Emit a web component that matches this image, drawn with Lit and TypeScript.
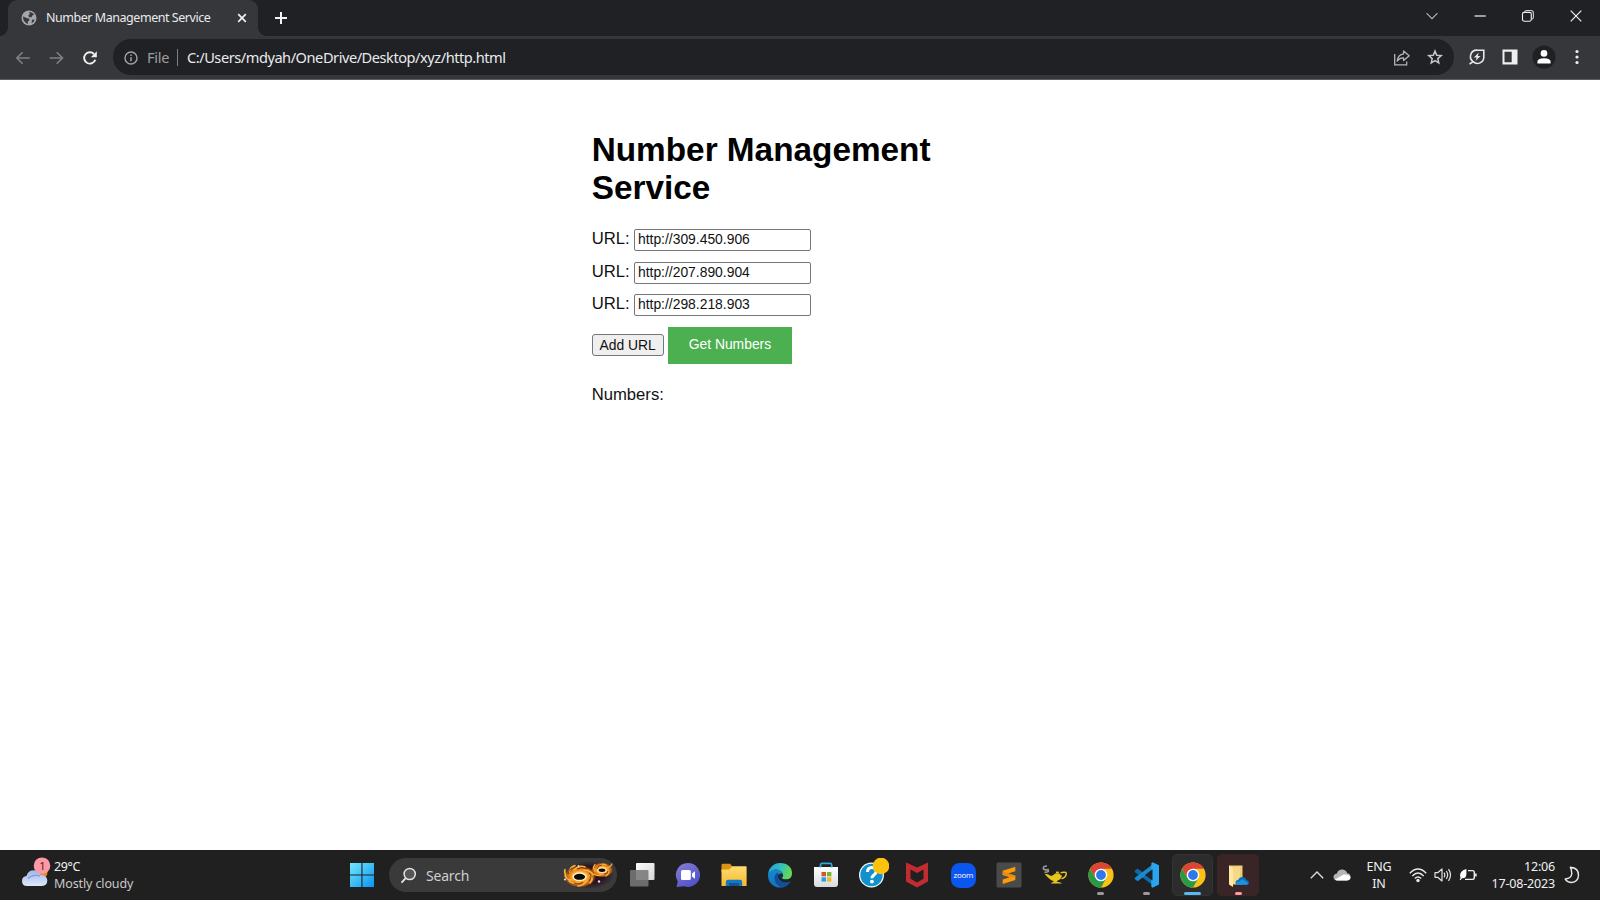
import { LitElement, html, css } from "lit";
import { customElement, state } from "lit/decorators.js";

const chromeLogo = html`<svg width="26" height="26" viewBox="0 0 26 26">
  <circle cx="13" cy="13" r="12.6" fill="#fbc116"/>
  <path d="M2.1 6.7A12.6 12.6 0 0 1 23.9 6.7L13 6.7 7.5 9.8 7.5 16z" fill="#dc4437"/>
  <path d="M2.1 6.7A12.6 12.6 0 0 0 13 25.6L18.4 16.1 13 19.2 7.5 16.1z" fill="#2a9a48"/>
  <circle cx="13" cy="13" r="6.3" fill="#fff"/>
  <circle cx="13" cy="13" r="4.9" fill="#2f78ea"/>
</svg>`;

const icons = {
  globe: html`<svg width="16" height="16" viewBox="0 0 16 16">
    <circle cx="8" cy="8" r="7.5" fill="#a4a7ab"/>
    <path d="M2 7.600Q2 7 2.300 6.500L6 8.200 8.200 8.600 8.300 10.500 6.800 11.600 6.900 13.900Q2.600 12.600 2 7.600zM8.200 2Q11.500 1.900 13.200 5L11.400 5.300 10.500 7.200 8 7.300 7.400 5.200 8.800 4z M11 9.800L13.700 9.600Q13 12.200 10.600 13.300z" fill="#38393d"/>
  </svg>`,
  tabClose: html`<svg width="10" height="10" viewBox="0 0 10 10"><path d="M1.200 1.200l7.600 7.600M8.800 1.200L1.200 8.800" stroke="#f1f1f1" stroke-width="1.700"/></svg>`,
  plus: html`<svg width="14" height="14" viewBox="0 0 14 14"><path d="M7 1v12M1 7h12" stroke="#f4f4f4" stroke-width="2"/></svg>`,
  down: html`<svg width="14" height="14" viewBox="0 0 14 14"><path d="M1.500 4.200L7 9.700l5.500-5.500" fill="none" stroke="#b4b5b7" stroke-width="1.100"/></svg>`,
  min: html`<svg width="14" height="14" viewBox="0 0 14 14"><path d="M1.500 7h11.300" stroke="#f2f2f2" stroke-width="1.200"/></svg>`,
  restore: html`<svg width="14" height="14" viewBox="0 0 14 14"><rect x="1.500" y="3.400" width="8.800" height="8.800" rx="1.600" fill="none" stroke="#f2f2f2" stroke-width="1.100"/><path d="M3.600 3.200q.3-1.700 2-1.700h4.300q2.500 0 2.500 2.500v4.300q0 1.800-1.900 2" fill="none" stroke="#d0d0d0" stroke-width="1.100"/></svg>`,
  close: html`<svg width="14" height="14" viewBox="0 0 14 14"><path d="M1.700 1.700l10.600 10.600M12.300 1.700L1.700 12.300" stroke="#f2f2f2" stroke-width="1.200"/></svg>`,
  back: html`<svg width="16" height="16" viewBox="0 0 16 16"><path d="M14.700 8H2M7.600 2.200L1.800 8l5.800 5.800" fill="none" stroke="#7f8185" stroke-width="1.600"/></svg>`,
  forward: html`<svg width="16" height="16" viewBox="0 0 16 16"><path d="M.6 8h13M7.700 2.200L13.500 8l-5.800 5.800" fill="none" stroke="#7f8185" stroke-width="1.600"/></svg>`,
  reload: html`<svg width="16" height="16" viewBox="0 0 16 16"><path d="M13.300 9.700A5.700 5.700 0 1 1 12 4" fill="none" stroke="#f1f1f1" stroke-width="1.900"/><path d="M14.800 1.300v6H8.800z" fill="#f1f1f1"/></svg>`,
  info: html`<svg width="14" height="14" viewBox="0 0 14 14"><circle cx="7" cy="7" r="6" fill="none" stroke="#a0a3a7" stroke-width="1.400"/><path d="M7 6.200v4M7 3.600v1.500" stroke="#a0a3a7" stroke-width="1.500"/></svg>`,
  share: html`<svg width="18" height="17" viewBox="0 0 18 17"><path d="M1.700 5v10.800h12V12.500" fill="none" stroke="#b3b5b8" stroke-width="1.300"/><path d="M10.600 2l5.600 4.800-5.600 4.800V8.900Q6.700 8.700 4.200 12 5 5.500 10.600 4.800z" fill="none" stroke="#b3b5b8" stroke-width="1.300" stroke-linejoin="round"/></svg>`,
  star: html`<svg width="18" height="18" viewBox="0 0 18 18"><path d="M9 3l1.700 4.200 4.500.4-3.400 3 1 4.400L9 12.700 5.200 15l1-4.400-3.400-3 4.500-.4z" fill="none" stroke="#c4c6c8" stroke-width="1.500"/></svg>`,
  leaf: html`<svg width="18" height="18" viewBox="0 0 18 18"><path d="M15.800 2.200V9a6.300 6.300 0 0 1-10.700 4.600A6.300 6.300 0 0 1 9.300 2.200zM5.200 13.500l-3.700 2.700" fill="none" stroke="#e6e7e8" stroke-width="1.600"/><path d="M10.700 4.600L5.900 9.500h2.700l-.8 3.300 4.700-4.900H9.800z" fill="#e6e7e8"/></svg>`,
  panel: html`<svg width="16" height="16" viewBox="0 0 16 16"><path d="M.5.500h15v15H.5zM2.500 2.700v10.600h7.200V2.700z" fill="#eeeff0" fill-rule="evenodd"/></svg>`,
  avatar: html`<svg width="24" height="24" viewBox="0 0 24 24"><circle cx="12" cy="12" r="11.500" fill="#1f2023"/><circle cx="12" cy="8.400" r="3.300" fill="#fff"/><path d="M5.400 18.500v-1.700q0-3.600 6.600-3.600t6.600 3.600v1.700z" fill="#fff"/></svg>`,
  dots: html`<svg width="6" height="16" viewBox="0 0 6 16"><g fill="#eeeff0"><circle cx="3" cy="2.500" r="1.600"/><circle cx="3" cy="8" r="1.600"/><circle cx="3" cy="13.500" r="1.600"/></g></svg>`,

  weather: html`<svg width="30" height="32" viewBox="0 0 30 32">
    <defs><linearGradient id="w" x2="0" y2="1"><stop stop-color="#9db7ea"/><stop offset="1" stop-color="#dfe8fb"/></linearGradient></defs>
    <circle cx="20.500" cy="15.500" r="6" fill="#e58a2a"/>
    <path d="M6 29q-5 0-5-5 0-4.500 4.500-5Q7 13.200 12.500 13.200q5.300 0 7 4.800 6.800 0 6.800 5.600T20.500 29z" fill="url(#w)"/>
    <path d="M7 21.500q5-5 12-2.500" fill="none" stroke="#86a2de" stroke-width="1.500"/>
    <circle cx="21" cy="8.700" r="8.300" fill="#fd99a3"/>
  </svg>`,
  windows: html`<svg width="26" height="26" viewBox="0 0 26 26"><defs><linearGradient id="win" x2="1" y2="1"><stop stop-color="#72e8fb"/><stop offset="1" stop-color="#0a93f2"/></linearGradient></defs><path d="M1 1h11.400v11.400H1zM13.500 1H25v11.400H13.500zM1 13.500h11.400V25H1zM13.500 13.500H25V25H13.500z" fill="url(#win)"/></svg>`,
  search: html`<svg width="17" height="17" viewBox="0 0 17 17"><circle cx="9.700" cy="7" r="5.600" fill="#565656" stroke="#e2e2e2" stroke-width="1.500"/><path d="M5.700 11.200L1.500 15.700" stroke="#e2e2e2" stroke-width="1.900"/></svg>`,
  galaxy: html`<svg width="52" height="28" viewBox="0 0 52 28">
    <defs>
      <radialGradient id="ga"><stop offset=".3" stop-color="#ffdc8a"/><stop offset=".5" stop-color="#f7a227"/><stop offset=".8" stop-color="#c86511"/><stop offset="1" stop-color="#c86511" stop-opacity="0"/></radialGradient>
      <radialGradient id="gb"><stop offset=".6" stop-color="#2a1420"/><stop offset="1" stop-color="#2a1420" stop-opacity="0"/></radialGradient>
    </defs>
    <ellipse cx="27" cy="14" rx="25" ry="14" fill="url(#gb)"/>
    <ellipse cx="18" cy="15.500" rx="16" ry="11" fill="url(#ga)"/>
    <ellipse cx="40" cy="9" rx="11" ry="7.500" fill="url(#ga)"/>
    <g fill="none" stroke="#f9b13b" stroke-width="1.600" stroke-linecap="round">
      <path d="M4 15Q2 11 3 8.500M7 11Q8 6 13 4.500M12 9Q17 4 23 6M22 9Q29 9 31 14M28 14Q32 18 28 22M25 19Q22 25 16 25M16 22Q10 23 7 20M10 19Q5 19 3 15"/>
      <path d="M33 10Q30 7 33 3.500M36 6Q40 1.500 44 4M43 7Q48 7 50 3M46 9Q48 12 44 15M40 13Q36 16 32 13" stroke-width="1.200"/>
    </g>
    <g fill="none" stroke="#6b2d10" stroke-width=".9"><path d="M6 13Q6 9 10 7M15 8Q20 5 25 8M27 12Q31 15 27 20M21 21Q18 24 12 22M35 8Q36 4 40 4M46 10Q46 13 42 13"/></g>
    <ellipse cx="17.500" cy="15.800" rx="7.200" ry="4.300" fill="#fff0c4"/><ellipse cx="17.500" cy="15.800" rx="5.600" ry="3" fill="#0b0809"/>
    <ellipse cx="40" cy="9.300" rx="4.800" ry="2.800" fill="#fde1a0"/><ellipse cx="40" cy="9.300" rx="3.400" ry="1.700" fill="#0b0809"/>
    <g fill="#e8d9e8"><circle cx="3" cy="18.500" r="1.100"/><circle cx="37" cy="20.500" r="1.200"/><circle cx="16.500" cy="5" r=".9"/></g>
  </svg>`,
  taskview: html`<svg width="26" height="26" viewBox="0 0 26 26"><defs><linearGradient id="tv" x2="1" y2="1"><stop stop-color="#fff"/><stop offset="1" stop-color="#d5d5d5"/></linearGradient></defs><rect x="7" y="1" width="18.500" height="17" rx="1" fill="url(#tv)"/><rect x="1" y="8" width="18.500" height="16.500" rx="1" fill="#777" opacity=".88"/></svg>`,
  chat: html`<svg width="26" height="26" viewBox="0 0 26 26"><defs><linearGradient id="ch" x2=".7" y2="1"><stop stop-color="#8b7fd4"/><stop offset="1" stop-color="#4c50c8"/></linearGradient></defs><path d="M13 1a12 12 0 1 1-4 23.300L1.500 25l1.300-5.500A12 12 0 0 1 13 1z" fill="url(#ch)"/><rect x="6" y="8" width="9.800" height="10" rx="1.600" fill="#fff"/><path d="M17 11.500l3-2.300v7.600l-3-2.300z" fill="#fff"/></svg>`,
  explorer: html`<svg width="26" height="26" viewBox="0 0 26 26"><defs><linearGradient id="ex" x2="0" y2="1"><stop stop-color="#ffdb70"/><stop offset="1" stop-color="#f4bb31"/></linearGradient></defs><path d="M.5 3q0-1.200 1.200-1.200H9L12 5v5H.5z" fill="#dc9417"/><path d="M.5 7.500H8l3.500-3.200H25q.6 0 .6.700v19H.5z" fill="url(#ex)"/><path d="M4.800 24v-4q0-2.200 2.200-2.200h12q2.200 0 2.200 2.200v4z" fill="#1678c1"/><path d="M8 21h10v3H8z" fill="#0c5794"/></svg>`,
  edge: html`<svg width="26" height="26" viewBox="0 0 28 28">
    <defs><linearGradient id="e1" x2="1" y2=".35"><stop stop-color="#229fe0"/><stop offset=".5" stop-color="#2ebcc4"/><stop offset="1" stop-color="#62d958"/></linearGradient><linearGradient id="e2" x2="0" y2="1"><stop stop-color="#1688d2"/><stop offset="1" stop-color="#1672ba"/></linearGradient></defs>
    <path d="M1.200 13A13 13 0 0 1 14 1Q26.800 1.500 27 12.500q-.2 6-6.200 6.300-5 .2-4.600-1.800 2-2.300.6-5Q10 3.500 1.200 13z" fill="url(#e1)"/>
    <path d="M1.100 13Q4 7.500 10 8q5 .3 7 4.800-5-1-6 3Q10 22 17 23.500q5 .5 8-2A13 13 0 0 1 1.100 13z" fill="url(#e2)"/>
    <path d="M10.800 11.500Q6.500 15 9 21.500q2 4.500 6.500 5.300Q22.500 26 25.800 20.200 21 23 16.300 21 10.500 18 12.500 12.500z" fill="#124f9b"/>
    <path d="M16.200 16.500Q17.300 14 15.800 12.500 12.900 12.800 13.200 16q1.300 3.300 5 4 3.500.2 5.500-.7 0-.6-.8-.5-4.500.6-6.500-1.100-.5-.4-.2-1.200z" fill="#1b2c44"/>
  </svg>`,
  store: html`<svg width="26" height="26" viewBox="0 0 26 26"><path d="M7.500 6V3q0-1.600 1.600-1.600h8q1.600 0 1.600 1.600v3" fill="none" stroke="#2da6da" stroke-width="1.600"/><defs><linearGradient id="st" x2="0" y2="1"><stop stop-color="#fff"/><stop offset="1" stop-color="#d9dadd"/></linearGradient></defs><path d="M1 5h24v17q0 3-3 3H4q-3 0-3-3z" fill="url(#st)"/><path d="M7.500 3.500v2M18.700 3.500v2" stroke="#2da6da" stroke-width="1.600"/><path d="M8.500 10H13v4.300H8.500z" fill="#e04d2b"/><path d="M14 10h4.400v4.300H14z" fill="#74b72b"/><path d="M8.500 15.300H13v4.300H8.500z" fill="#22a2e5"/><path d="M14 15.300h4.400v4.300H14z" fill="#f6b61c"/></svg>`,
  help: html`<svg width="34" height="34" viewBox="0 0 34 34"><circle cx="16.500" cy="17" r="12.500" fill="#f6fafc"/><circle cx="16.500" cy="17" r="11.200" fill="#1291cd"/><path d="M12.500 14q0-4.500 4.300-4.500t4.300 4q0 2.200-2.300 3.600-1.900 1.200-1.900 3.100" fill="none" stroke="#fff" stroke-width="3"/><circle cx="16.900" cy="23.600" r="1.900" fill="#fff"/><circle cx="26" cy="8" r="8.300" fill="#ffc20c"/></svg>`,
  mcafee: html`<svg width="24" height="28" viewBox="0 0 24 28"><path d="M1 1.500l11 5 11-5v19L12 26.500 1 20.500z" fill="#c22c30"/><path d="M5.500 8.500L12 12l6.500-3.500v9.300L12 21.500l-6.500-3.700z" fill="#202020"/></svg>`,
  sublime: html`<svg width="26" height="26" viewBox="0 0 26 26"><rect x=".5" y=".5" width="25" height="25" rx="1.500" fill="#4a4a4a"/><path d="M19.300 4.800v4.400L12 11.500l7.300 2.300v4.300L6.700 21.900v-4.400l7-2.200-7-2.200V8.700z" fill="#fc9a09"/><path d="M6.700 9.500l12.600 4.300v2L6.700 13.100z" fill="#ee8b06"/></svg>`,
  lamp: html`<svg width="26" height="20" viewBox="0 0 26 20"><path d="M5 1Q.5 1 1.500 4q2 1.500 4.500.4Q8 7.500 2.500 7.300" fill="none" stroke="#9a9a9a" stroke-width="1.600"/><path d="M2.500 8.800q3.500 0 6.500 2.200 3-.4 4-2.400h4.500l1.200 1.700h1.200q-.2 4-4.200 5.200l-1 1.200q3 .6 5 1.300v.6H9v-.6q1.500-.8 3-1.400Q7 14.500 2.500 8.800z" fill="#e6c51e"/><path d="M18.500 8q2.500-1.300 5.500-.5 1.200 4-4.500 6.300" fill="none" stroke="#e6c51e" stroke-width="1.400"/><path d="M14 7.500h2.800" stroke="#e6c51e" stroke-width="1.800"/></svg>`,
  vscode: html`<svg width="26" height="28" viewBox="0 0 26 28"><path d="M1 9.500l2-1.600q.7-.4 1.300 0L18.500 19v5L1.200 11.300q-1-.9-.2-1.800z" fill="#0d6bac"/><path d="M1 18.200l2 1.600q.7.400 1.300 0L18.500 9V3.500L1.200 16.400q-1 .9-.2 1.800z" fill="#168bd0"/><path d="M18.500 1.200l6.500 3v19.300l-6.500 3.300-1.200-1.100V2.300z" fill="#2ba6ee"/><path d="M18.500 8.300L11 13.900l7.500 5.700z" fill="#202225"/></svg>`,
  onedriveFolder: html`<svg width="22" height="26" viewBox="0 0 22 26"><path d="M2 3.500H15.500v19H5z" fill="#f0cd73"/><path d="M2 3.500l4 2.200V25l-4-2.500z" fill="#ffe8a2"/><path d="M6 5.700l7-1.500V22H6z" fill="#f7d888"/><path d="M10.500 22.800q-2.200-.2-2-2.500.3-2.200 2.700-2.300 1-3 4-3 3.200 0 4.200 3 2.500.3 2.500 2.600 0 2-2.300 2.200z" fill="#0a6fc4"/><path d="M8.700 20.800l7-3.200 5.800 3.700q-.7 1.500-2 1.500h-9q-1.600-.3-1.800-2z" fill="#1e93de"/></svg>`,

  up: html`<svg width="14" height="10" viewBox="0 0 14 10"><path d="M.8 8.200L7 2l6.200 6.200" fill="none" stroke="#e0e0e0" stroke-width="1.300"/></svg>`,
  cloud: html`<svg width="18" height="12" viewBox="0 0 18 12"><path d="M4 11.500Q.5 11 .5 8q0-3 3.200-3.300Q5.300.5 9 .5q4 0 5.200 3.700 3.300.3 3.300 3.600 0 3.400-3.500 3.700z" fill="#b5b5b5"/><path d="M2 10.500L10.500 5.500q6-.5 7 3-.5 3-3.500 3H4q-1.300 0-2-1z" fill="#fff"/></svg>`,
  wifi: html`<svg width="18" height="16" viewBox="0 0 18 16"><g fill="none" stroke="#e8e8e8" stroke-width="1.400"><path d="M.8 6.200Q9-2.300 17.200 6.200M3.300 8.900Q9 3.100 14.700 8.900M5.800 11.500Q9 8.300 12.200 11.500"/></g><circle cx="9" cy="13.500" r="1.700" fill="#e8e8e8"/></svg>`,
  sound: html`<svg width="18" height="16" viewBox="0 0 18 16"><g fill="none" stroke="#e2e2e2" stroke-width="1.200"><path d="M1 5.700h2.700L8 2v12l-4.300-3.700H1z" stroke-linejoin="round"/><path d="M10 5.700Q11.600 8 10 10.300M12.300 4Q15 8 12.300 12M14.500 2.200q4 5.800 0 11.600"/></g></svg>`,
  battery: html`<svg width="18" height="14" viewBox="0 0 18 14"><path d="M9 2.600h4.500q1.800 0 1.800 1.800v5.200q0 1.800-1.800 1.800H6" fill="none" stroke="#eee" stroke-width="1.400"/><path d="M16.900 5.400v3.200" stroke="#eee" stroke-width="1.600"/><path d="M7.400 1v5.200q-.3 4.300-4.200 3.900L1.500 12.200l-.8-.8.900-1.400Q-.8 3.400 7.400 1z" fill="#fff"/></svg>`,
  moon: html`<svg width="16" height="18" viewBox="0 0 16 18"><path d="M6.300 1.300Q14.800 2 14.500 9.500 14 16 7.500 16.500 3.500 16.500 1.200 13 7.500 12.500 7.800 7.500 7.700 4 6.300 1.300z" fill="none" stroke="#e8e8e8" stroke-width="1.400" stroke-linejoin="round"/></svg>`,
};

@customElement("browser-chrome")
class BrowserChrome extends LitElement {
  static styles = css`
    :host { display: block; height: 80px; background: #36373b; font-family: "Noto Sans", "Open Sans", sans-serif; color: #e9eaec; }
    * { box-sizing: border-box; }
    svg { display: block; flex: none; }
    .strip { height: 36px; display: flex; background: #202125; padding-left: 8px; }
    .tab { width: 250px; height: 36px; background: #36373b; border-radius: 9px 9px 0 0; display: flex; align-items: center; padding: 0 11px 1px 13px; position: relative; }
    .tab::before, .tab::after { content: ""; position: absolute; bottom: 0; width: 8px; height: 8px; }
    .tab::before { left: -8px; background: radial-gradient(circle at 0 0, transparent 7.500px, #36373b 8px); }
    .tab::after { right: -8px; background: radial-gradient(circle at 100% 0, transparent 7.500px, #36373b 8px); }
    .title { flex: 1; margin-left: 9px; font-size: 12.500px; letter-spacing: -0.460px; white-space: nowrap; }
    .plus { margin: 11px auto 0 16px; }
    .controls { display: flex; padding: 9px 0 0; }
    .controls span { width: 48px; display: flex; justify-content: center; }
    .bar { height: 44px; display: flex; align-items: center; padding: 0 0 1px 15px; border-bottom: 1px solid #5c5d61; }
    .nav { display: flex; gap: 17.500px; width: 98px; padding-top: 1px; }
    .omni { height: 36px; flex: none; width: 1341px; display: flex; align-items: center; border-radius: 18px; background: #202125; padding: 0 10px 0 11px; }
    .info { padding-top: 1px; }
    .file { margin-left: 9px; width: 30px; font-size: 14.600px; letter-spacing: -0.300px; color: #9a9da1; }
    .sep { width: 1px; height: 17px; background: #7d7f83; }
    .url { flex: 1; margin-left: 9px; font-size: 14.600px; letter-spacing: -0.465px; white-space: nowrap; }
    .star { margin-left: 15px; }
    .tools { flex: 1; display: flex; align-items: center; padding-left: 14px; }
    .panel { margin-left: 16px; } .avatar { margin-left: 14px; } .dots { margin-left: 18px; }
  `;
  render() {
    return html`
      <div class="strip">
        <div class="tab">${icons.globe}<span class="title">Number Management Service</span>${icons.tabClose}</div>
        <div class="plus">${icons.plus}</div>
        <div class="controls"><span>${icons.down}</span><span>${icons.min}</span><span>${icons.restore}</span><span>${icons.close}</span></div>
      </div>
      <div class="bar">
        <div class="nav">${icons.back}${icons.forward}${icons.reload}</div>
        <div class="omni"><span class="info">${icons.info}</span><span class="file">File</span><span class="sep"></span>
          <span class="url">C:/Users/mdyah/OneDrive/Desktop/xyz/http.html</span>
          ${icons.share}<span class="star">${icons.star}</span></div>
        <div class="tools">${icons.leaf}<span class="panel">${icons.panel}</span><span class="avatar">${icons.avatar}</span><span class="dots">${icons.dots}</span></div>
      </div>`;
  }
}

@customElement("number-service")
class NumberService extends LitElement {
  @state() urls = ["http://309.450.906", "http://207.890.904", "http://298.218.903"];
  static styles = css`
    :host { display: block; width: 416.670px; margin: 0 auto; padding-top: 51px; font: 16.670px "Liberation Sans", Arial, sans-serif; color: #111; }
    * { box-sizing: border-box; }
    h1 { margin: 0 0 23px; font-size: 33.330px; line-height: 37.500px; color: #000; }
    .row { display: flex; height: 22px; margin-bottom: 10.500px; }
    label { width: 42.300px; line-height: 19px; }
    input { width: 177px; height: 22px; border: 1px solid #767676; border-radius: 2px; padding: 0 3px 2px; font: 13.890px "Liberation Sans", Arial, sans-serif; color: #111; }
    .actions { display: flex; align-items: center; gap: 4px; height: 37px; }
    button { padding: 0 0 1px; font: 13.890px "Liberation Sans", Arial, sans-serif; color: #111; }
    .add { width: 72px; height: 22px; border: 1px solid #767676; border-radius: 3px; background: #efefef; }
    .get { width: 124.500px; height: 37px; border: 0; padding-bottom: 2px; background: #4caf50; color: #fff; }
    .result { margin-top: 21px; line-height: 19px; }
  `;
  render() {
    return html`
      <h1>Number Management Service</h1>
      ${this.urls.map((u) => html`<div class="row"><label>URL:</label><input type="text" .value=${u}></div>`)}
      <div class="actions">
        <button class="add" @click=${() => (this.urls = [...this.urls, ""])}>Add URL</button>
        <button class="get">Get Numbers</button>
      </div>
      <div class="result">Numbers:</div>`;
  }
}

@customElement("task-bar")
class TaskBar extends LitElement {
  static styles = css`
    :host { display: flex; height: 50px; background: #202020; color: #f0f0f0; font: 12.500px "Noto Sans", "Open Sans", sans-serif; }
    * { box-sizing: border-box; }
    svg { display: block; flex: none; }
    .weather { width: 339px; display: flex; padding: 7px 0 0 21px; position: relative; }
    .badge { position: absolute; left: 34px; top: 7px; width: 17px; text-align: center; line-height: 17px; font-size: 11px; color: #4b2226; }
    .lines { line-height: 17px; padding-top: 1px; margin-left: 3px; white-space: nowrap; }
    .lines div + div { color: #c9c9c9; }
    .cond { letter-spacing: -0.120px; }
    .temp { letter-spacing: -0.400px; }
    .slot { width: 45.850px; flex: none; display: flex; align-items: center; justify-content: center; position: relative; }
    .start { width: 46px; }
    .search { width: 228px; height: 34px; margin: 8px 2.500px 0 4px; border-radius: 17px; background: #3a3a3a; display: flex; align-items: center; padding: 0 3px 0 11px; }
    .search span { flex: 1; margin-left: 9px; font-size: 14px; color: #cfcfcf; letter-spacing: -0.200px; }
    .slot.on::before { content: ""; position: absolute; inset: 4px 2px; border-radius: 5px; background: #2c2c2c; border: 1px solid #333; }
    .slot.alert::before { content: ""; position: absolute; inset: 4px 2px; border-radius: 5px; background: #3a2526; }
    .slot svg { position: relative; }
    .slot i { position: absolute; bottom: 5px; width: 7px; height: 3px; border-radius: 2px; background: #9b9b9b; }
    .on i { width: 17px; background: #5cb9ec; }
    .alert i { background: #fb9ba5; }
    .zoom { width: 25px; height: 25px; border-radius: 8.500px; background: #0b55f0; color: #fff; font: 400 8px/23px "Open Sans", sans-serif; text-align: center; letter-spacing: -0.300px; }
    .tray { margin-left: auto; display: flex; align-items: center; padding-right: 20px; }
    .lang { width: 26px; margin: 0 17px 0 15px; text-align: center; line-height: 17px; letter-spacing: -0.200px; }
    .clock { text-align: right; line-height: 17px; margin: 0 9px 0 13px; width: 65px; letter-spacing: -0.180px; white-space: nowrap; }
    .up { margin: 0 9px 0 0; } .snd { margin: 0 7px; }
  `;
  render() {
    const slot = (icon: unknown, cls = "", running = false) =>
      html`<div class="slot ${cls}">${icon}${running ? html`<i></i>` : ""}</div>`;
    return html`
      <div class="weather">${icons.weather}<span class="badge">1</span>
        <div class="lines"><div class="temp">29°C</div><div class="cond">Mostly cloudy</div></div></div>
      ${slot(icons.windows, "start")}
      <div class="search">${icons.search}<span>Search</span>${icons.galaxy}</div>
      ${slot(icons.taskview)}${slot(icons.chat)}${slot(icons.explorer)}${slot(icons.edge)}${slot(icons.store)}
      ${slot(icons.help)}${slot(icons.mcafee)}${slot(html`<div class="zoom">zoom</div>`)}${slot(icons.sublime)}
      ${slot(icons.lamp)}${slot(chromeLogo, "", true)}${slot(icons.vscode, "", true)}${slot(chromeLogo, "on", true)}
      ${slot(icons.onedriveFolder, "alert", true)}
      <div class="tray">
        <span class="up">${icons.up}</span>${icons.cloud}
        <div class="lang">ENG<br>IN</div>
        ${icons.wifi}<span class="snd">${icons.sound}</span>${icons.battery}
        <div class="clock">12:06<br>17-08-2023</div>${icons.moon}
      </div>`;
  }
}

@customElement("app-root")
class AppRoot extends LitElement {
  static styles = css`
    :host { display: flex; flex-direction: column; width: 1600px; height: 900px; overflow: hidden; background: #fff; }
    main { flex: 1; }
  `;
  render() {
    return html`<browser-chrome></browser-chrome><main><number-service></number-service></main><task-bar></task-bar>`;
  }
}
